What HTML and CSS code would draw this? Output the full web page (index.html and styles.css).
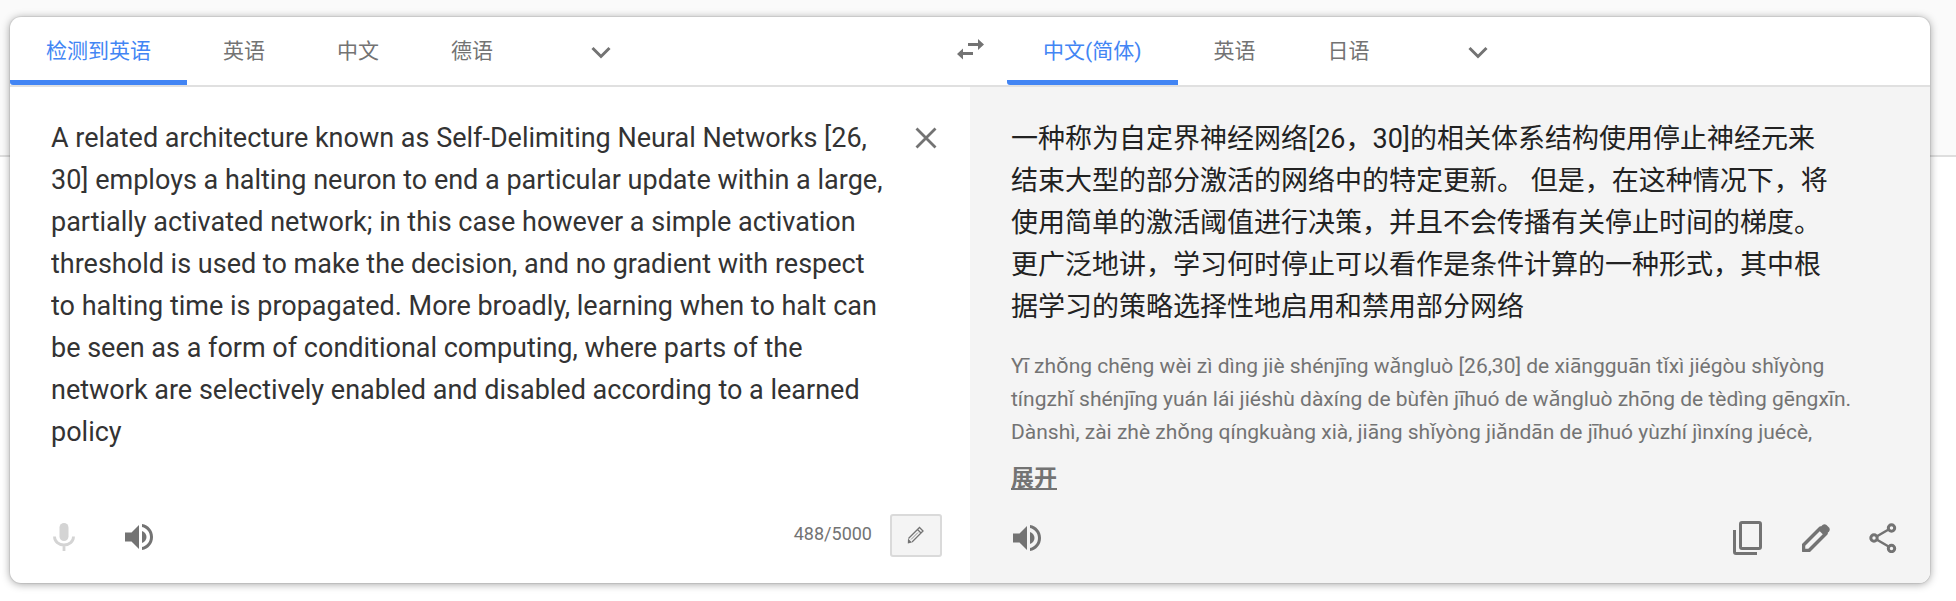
FILE: index.html
```html
<!DOCTYPE html>
<html lang="zh-CN">
<head>
<meta charset="utf-8">
<title>翻译</title>
<link rel="stylesheet" href="styles.css">
</head>
<body>
<main class="card">
  <header class="languages">
    <nav class="tabs" aria-label="源语言">
      <button class="tab active">检测到英语</button>
      <button class="tab">英语</button>
      <button class="tab">中文</button>
      <button class="tab">德语</button>
      <button class="more" aria-label="更多源语言"><svg width="20" height="13" viewBox="0 0 20 13"><path d="M1.500 2 10 10.500 18.500 2" fill="none" stroke="currentColor" stroke-width="3"/></svg></button>
    </nav>
    <button class="swap" aria-label="交换语言"><svg width="27" height="21" viewBox="0 0 27 21"><path d="M11 4h10V0l6 5.500-6 5.500V7H11zM16 13H6V9.500L0 15l6 5.500V16h10z" fill="currentColor"/></svg></button>
    <nav class="tabs" aria-label="目标语言">
      <button class="tab active">中文(简体)</button>
      <button class="tab">英语</button>
      <button class="tab">日语</button>
      <button class="more" aria-label="更多目标语言"><svg width="20" height="13" viewBox="0 0 20 13"><path d="M1.500 2 10 10.500 18.500 2" fill="none" stroke="currentColor" stroke-width="3"/></svg></button>
    </nav>
  </header>
  <div class="panes">
    <section class="pane source">
      <div class="entry">
        <textarea class="input" rows="8" aria-label="原文" spellcheck="false">A related architecture known as Self-Delimiting Neural Networks [26, 30] employs a halting neuron to end a particular update within a large, partially activated network; in this case however a simple activation threshold is used to make the decision, and no gradient with respect to halting time is propagated. More broadly, learning when to halt can be seen as a form of conditional computing, where parts of the network are selectively enabled and disabled according to a learned policy</textarea>
        <button class="icon clear" aria-label="清除"><svg width="22" height="22" viewBox="0 0 22 22"><path d="M1.500 1.500l19 19M20.500 1.500l-19 19" fill="none" stroke="currentColor" stroke-width="2.800"/></svg></button>
      </div>
      <footer class="tools">
        <button class="icon mic" aria-label="语音输入"><svg width="22" height="30" viewBox="0 0 22 30"><rect x="6.500" y="1" width="9" height="18" rx="4.500" fill="currentColor"/><path d="M1.500 14.500c0 5 4.200 8.500 9.500 8.500s9.500-3.500 9.500-8.500M11 23v6" fill="none" stroke="currentColor" stroke-width="2.800"/></svg></button>
        <button class="icon" aria-label="朗读原文"><svg width="28" height="28" viewBox="0 0 28 28"><path d="M0 9.500h6.500L14 2v24l-7.500-7.500H0zM17 8c3 1.200 4.500 3.400 4.500 6s-1.500 4.800-4.500 6zM17 1c6.500 1 11 6.500 11 13s-4.500 12-11 13v-3c5-1.300 8-5.200 8-10s-3-8.700-8-10z" fill="currentColor"/></svg></button>
        <span class="count">488/5000</span>
        <button class="keyboard" aria-label="手写输入"><svg width="18" height="18" viewBox="0 0 18 18"><path d="M1.500 12.500 12.500 1.500l3.500 3.500L5 16M10.500 3.500 14 7" fill="none" stroke="currentColor" stroke-width="1.300"/><path d="M11 6.500 4 13.500" stroke="currentColor" stroke-width=".8"/><path d="M1 12.500 5 16.500l-4.200 1z" fill="currentColor"/></svg></button>
      </footer>
    </section>
    <section class="pane target">
      <div class="output">
        <p class="translation">一种称为自定界神经网络[26，30]的相关体系结构使用停止神经元来结束大型的部分激活的网络中的特定更新。 但是，在这种情况下，将使用简单的激活阈值进行决策，并且不会传播有关停止时间的梯度。 更广泛地讲，学习何时停止可以看作是条件计算的一种形式，其中根据学习的策略选择性地启用和禁用部分网络</p>
        <p class="pinyin">Yī zhǒng chēng wèi zì dìng jiè shénjīng wǎngluò [26,30] de xiāngguān tǐxì jiégòu shǐyòng tíngzhǐ shénjīng yuán lái jiéshù dàxíng de bùfèn jīhuó de wǎngluò zhōng de tèdìng gēngxīn. Dànshì, zài zhè zhǒng qíngkuàng xià, jiāng shǐyòng jiǎndān de jīhuó yùzhí jìnxíng juécè,</p>
        <button class="expand">展开</button>
      </div>
      <footer class="tools">
        <button class="icon" aria-label="朗读译文"><svg width="28" height="28" viewBox="0 0 28 28"><path d="M0 9.500h6.500L14 2v24l-7.500-7.500H0zM17 8c3 1.200 4.500 3.400 4.500 6s-1.500 4.800-4.500 6zM17 1c6.500 1 11 6.500 11 13s-4.500 12-11 13v-3c5-1.300 8-5.200 8-10s-3-8.700-8-10z" fill="currentColor"/></svg></button>
        <div class="actions">
          <button class="icon" aria-label="复制"><svg width="30" height="34" viewBox="0 0 30 34"><rect x="7.500" y="1.500" width="20" height="26" rx="1.500" fill="none" stroke="currentColor" stroke-width="3"/><path d="M1.500 9v22a1.500 1.500 0 0 0 1.500 1.500h21" fill="none" stroke="currentColor" stroke-width="3"/></svg></button>
          <button class="icon" aria-label="修改"><svg width="28" height="28" viewBox="0 0 28 28"><path d="M1.500 21 18.500 4l5.500 5.500L7 26.500H1.500z" fill="none" stroke="currentColor" stroke-width="3.500" stroke-linejoin="round"/><path d="M16 5.500 20.500 1q2-1.500 4 0l2.500 2.500q1.500 2 0 4L22.500 12z" fill="currentColor"/></svg></button>
          <button class="icon" aria-label="分享"><svg width="28" height="30" viewBox="0 0 28 30"><path d="M5 15 23 4.500M5 15l18 10.500" stroke="currentColor" stroke-width="2.500"/><g fill="#f4f4f4" stroke="currentColor" stroke-width="3"><circle cx="5" cy="15" r="3.200"/><circle cx="22.500" cy="5" r="3.200"/><circle cx="22.500" cy="25.500" r="3.200"/></g></svg></button>
        </div>
      </footer>
    </section>
  </div>
</main>
</body>
</html>
```

FILE: styles.css
```css
* {
  box-sizing: border-box;
}

body {
  margin: 0;
  padding: 17px 26px 18px 10px;
  background: linear-gradient(#fafafa 155px, #dedede 155px, #dedede 157px, #fff 157px) no-repeat;
  font-family: Roboto, "Noto Sans CJK SC", sans-serif;
  color: #737373;
}

button {
  margin: 0;
  padding: 0;
  border: 0;
  background: none;
  color: inherit;
  font: inherit;
  cursor: pointer;
}

svg {
  display: block;
}

.card {
  background: #fff;
  border-radius: 11px;
  box-shadow: 0 0 0 1px rgba(0, 0, 0, 0.06), 0 1px 8px rgba(0, 0, 0, 0.38);
  overflow: hidden;
}

.languages {
  display: grid;
  grid-template-columns: 1fr 74px 1fr;
  border-bottom: 2px solid #e0e0e0;
}

.tabs {
  display: flex;
}

.tab {
  height: 68px;
  padding: 5px 36px 0;
  border-bottom: 5px solid transparent;
  font-size: 21px;
  line-height: 58px;
}

.tab.active {
  border-bottom-color: #4285f4;
  border-bottom-left-radius: 3px;
  color: #4285f4;
}

.more {
  display: flex;
  align-items: center;
  justify-content: center;
  width: 144px;
  padding-top: 2px;
}

.swap {
  display: flex;
  align-items: center;
  justify-content: center;
  padding-bottom: 4px;
}

.panes {
  display: grid;
  grid-template-columns: 1fr 1fr;
}

.pane {
  display: flex;
  flex-direction: column;
  justify-content: space-between;
}

.target {
  background: #f4f4f4;
}

.entry {
  display: flex;
  align-items: flex-start;
  justify-content: space-between;
  padding: 30px 33px 0 41px;
}

.input {
  flex: 1;
  margin: 0;
  padding: 0;
  border: 0;
  outline: 0;
  resize: none;
  overflow: hidden;
  background: none;
  color: #333;
  font: 27px/42px Roboto, sans-serif;
}

.clear {
  margin: 10px 0 0 24px;
}

.output {
  padding: 31px 72px 0 41px;
}

.translation {
  margin: 0 20px 22px 0;
  color: #222;
  font-size: 27px;
  line-height: 42px;
}

.pinyin {
  margin: 0 0 16px;
  font-family: Roboto, "Noto Sans", sans-serif;
  font-size: 21px;
  line-height: 33px;
}

.expand {
  display: block;
  font-size: 23px;
  font-weight: 700;
  line-height: 28px;
  text-decoration: underline;
}

.tools {
  display: flex;
  align-items: center;
  height: 90px;
  padding: 0 33px 0 43px;
}

.source .tools {
  height: 92px;
  padding: 0 28px 0 43px;
}

.mic {
  margin-right: 50px;
  color: #d4d4d4;
}

.count {
  margin: 0 18px 8px auto;
  font-size: 18px;
}

.keyboard {
  display: flex;
  align-items: center;
  justify-content: center;
  width: 52px;
  height: 43px;
  margin-bottom: 4px;
  border: 2px solid #dadada;
  border-radius: 3px;
  background: #f4f4f4;
}

.actions {
  display: flex;
  align-items: center;
  gap: 39px;
  margin-left: auto;
}
```
